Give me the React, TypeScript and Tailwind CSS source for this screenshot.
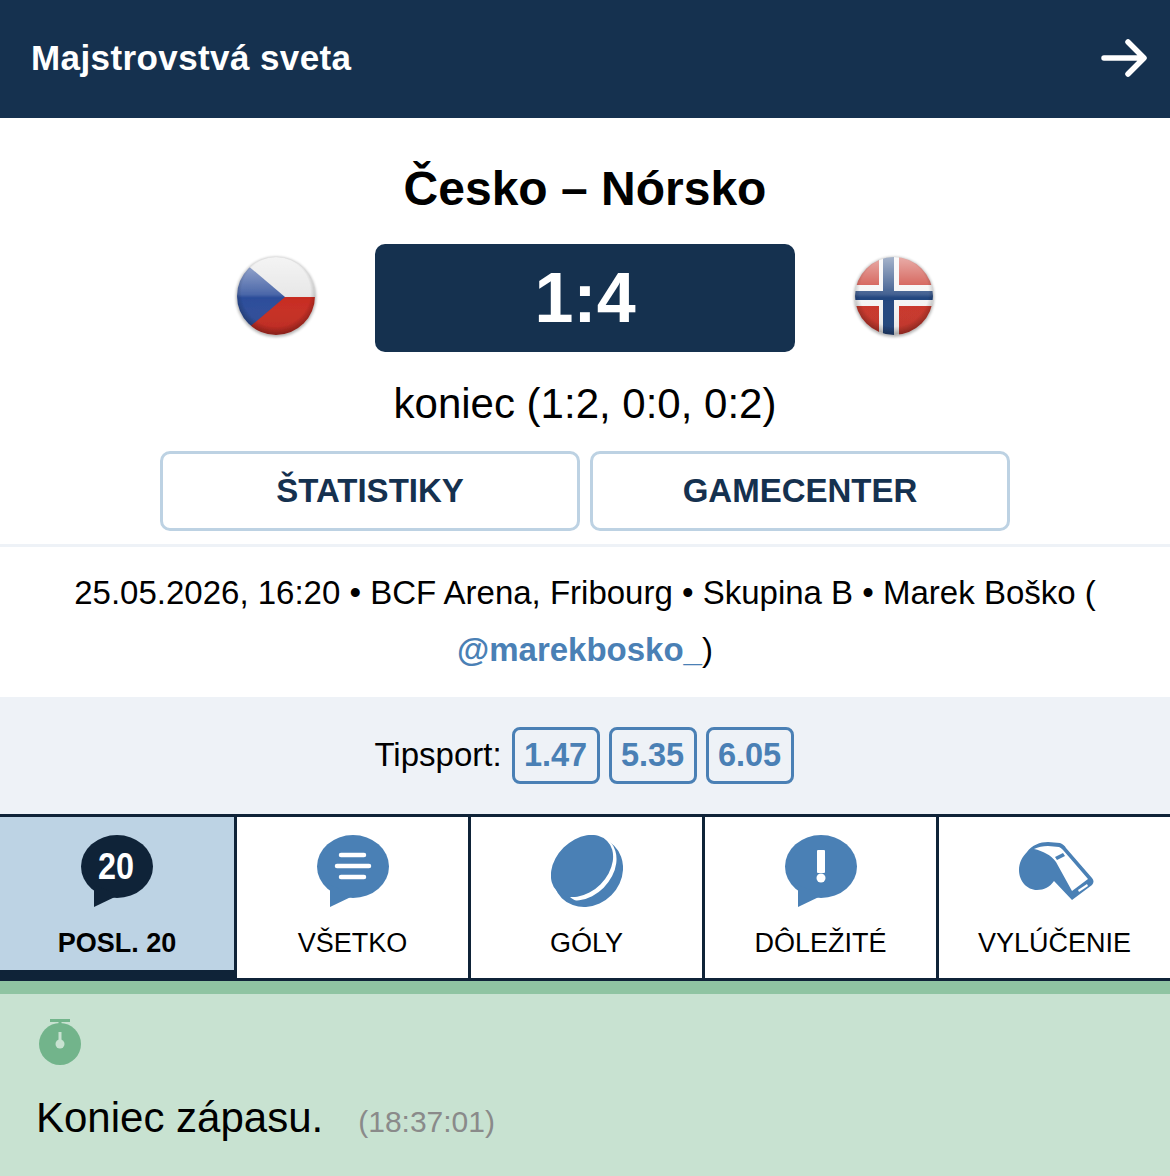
const Bubble = ({ fill, children }: { fill: string; children?: React.ReactNode }) => (
  <svg width="72" height="72" viewBox="0 0 72 72">
    <ellipse cx="36" cy="31.5" rx="36" ry="31.5" fill={fill} />
    <path d="M13 50 L13 72 L38 60 Z" fill={fill} />
    {children}
  </svg>
);

const PuckIcon = () => (
  <svg width="72" height="73" viewBox="6 5 72 73">
    <defs>
      <clipPath id="puck-rim">
        <ellipse cx="43" cy="42" rx="37" ry="33" transform="rotate(-45 43 42)" />
      </clipPath>
    </defs>
    <ellipse cx="43" cy="42" rx="37" ry="33" transform="rotate(-45 43 42)" fill="#4a80b5" />
    <ellipse cx="38.5" cy="37.5" rx="37" ry="28.5" transform="rotate(-45 38.5 37.5)" fill="#ffffff" clipPath="url(#puck-rim)" />
    <ellipse cx="37" cy="36" rx="35.5" ry="26" transform="rotate(-45 37 36)" fill="#4a80b5" />
  </svg>
);

const WhistleIcon = () => (
  <svg className="ml-[3px] mt-[7px]" width="75" height="60" viewBox="9 7 75 60">
    <path
      d="M17 17 C22 10 30 7 38 7 L50 8 C53 9 55 11 56 13 L82 43 C84 45 84 48 82 50 L62 65 L44 46 C40 52 34 55 27 55 C17 55 9 46 9 35 C9 28 12 22 17 17 Z"
      fill="#4a80b5"
    />
    <path d="M24 14 C28 12 33 11 38 11 L49 12 C51 13 52 14 53 15 L78 44 L62 56 L46 27 C41 20 33 16 24 14 Z" fill="#ffffff" />
    <path d="M45 22 L53 18 L55 21 L47 25 Z" fill="#4a80b5" />
    <path d="M68 55 L77 49 L78 51 L69 57 Z" fill="#ffffff" />
  </svg>
);

const Gloss = ({ id }: { id: string }) => (
  <>
    <rect width="88" height="88" fill={`url(#${id}-shine)`} />
    <circle cx="44" cy="44" r="39" fill={`url(#${id}-rim)`} />
  </>
);

const FlagDefs = ({ id }: { id: string }) => (
  <defs>
    <clipPath id={`${id}-clip`}>
      <circle cx="44" cy="44" r="39" />
    </clipPath>
    <filter id={`${id}-soft`} x="-20%" y="-20%" width="140%" height="140%">
      <feGaussianBlur stdDeviation="0.6" />
    </filter>
    <filter id={`${id}-shadow`} x="-20%" y="-20%" width="140%" height="140%">
      <feGaussianBlur stdDeviation="1.6" />
    </filter>
    <linearGradient id={`${id}-shine`} x1="0" y1="0" x2="0" y2="1">
      <stop offset="0.05" stopColor="#ffffff" stopOpacity="0.6" />
      <stop offset="0.48" stopColor="#ffffff" stopOpacity="0.15" />
      <stop offset="0.52" stopColor="#ffffff" stopOpacity="0" />
      <stop offset="1" stopColor="#000000" stopOpacity="0.1" />
    </linearGradient>
    <radialGradient id={`${id}-rim`} cx="0.5" cy="0.45" r="0.55">
      <stop offset="0.8" stopColor="#000000" stopOpacity="0" />
      <stop offset="1" stopColor="#000000" stopOpacity="0.28" />
    </radialGradient>
  </defs>
);

const CzechFlag = () => (
  <svg className="mb-[4px]" width="88" height="88" viewBox="0 0 88 88">
    <FlagDefs id="cz" />
    <circle cx="44" cy="45" r="40" fill="#000000" opacity="0.3" filter="url(#cz-shadow)" />
    <g clipPath="url(#cz-clip)" filter="url(#cz-soft)">
      <rect width="88" height="45" fill="#e4e4e4" />
      <rect y="45" width="88" height="43" fill="#c72c22" />
      <path d="M-12 -10 L53 45 L-12 100 Z" fill="#2c4d9a" />
      <Gloss id="cz" />
    </g>
  </svg>
);

const NorwayFlag = () => (
  <svg className="mb-[4px]" width="88" height="88" viewBox="0 0 88 88">
    <FlagDefs id="no" />
    <circle cx="44" cy="45" r="40" fill="#000000" opacity="0.3" filter="url(#no-shadow)" />
    <g clipPath="url(#no-clip)" filter="url(#no-soft)">
      <rect width="88" height="88" fill="#c9362b" />
      <rect x="29" width="20" height="88" fill="#f4f4f4" />
      <rect y="33" width="88" height="21" fill="#f4f4f4" />
      <rect x="33" width="11" height="88" fill="#23467f" />
      <rect y="39" width="88" height="9" fill="#23467f" />
      <Gloss id="no" />
    </g>
  </svg>
);

const Stopwatch = () => (
  <svg width="44" height="50" viewBox="0 0 44 50">
    <rect x="12" y="1" width="20" height="3" fill="#72b48b" />
    <rect x="20.5" y="3" width="3" height="3" fill="#72b48b" />
    <circle cx="22" cy="26" r="21" fill="#72b48b" />
    <rect x="20.5" y="14" width="3" height="12" fill="#c8e2d1" />
    <circle cx="22" cy="26" r="4.5" fill="#c8e2d1" />
  </svg>
);

const tabs = [
  {
    label: 'POSL. 20',
    active: true,
    icon: (
      <Bubble fill="#0f2338">
        <text x="17" y="44" fontSize="36" fontWeight="700" fill="#ffffff" textLength="36" lengthAdjust="spacingAndGlyphs">
          20
        </text>
      </Bubble>
    ),
  },
  {
    label: 'VŠETKO',
    icon: (
      <Bubble fill="#4a80b5">
        <path d="M24 20 H47 M20 31 H52 M24 42 H47" stroke="#ffffff" strokeWidth="4.5" strokeLinecap="round" />
      </Bubble>
    ),
  },
  { label: 'GÓLY', icon: <PuckIcon /> },
  {
    label: 'DÔLEŽITÉ',
    icon: (
      <Bubble fill="#4a80b5">
        <rect x="32" y="15" width="8" height="23" fill="#ffffff" rx="1" />
        <circle cx="36" cy="43" r="4.5" fill="#ffffff" />
      </Bubble>
    ),
  },
  { label: 'VYLÚČENIE', icon: <WhistleIcon /> },
];

const odds = ['1.47', '5.35', '6.05'];

export default function App() {
  return (
    <div className="h-[1176px] w-[1170px] overflow-hidden bg-white font-['Liberation_Sans',Arial,sans-serif] text-black">
      <header className="flex h-[118px] items-center justify-between bg-[#15314f] pl-[31px] pr-[23px]">
        <h1 className="pb-[2px] text-[35px] font-bold tracking-[0.4px] text-white">Majstrovstvá sveta</h1>
        <svg className="mb-[2px]" width="46" height="38" viewBox="0 0 46 38" fill="none" stroke="#ffffff" strokeWidth="5.5" strokeLinecap="round" strokeLinejoin="round">
          <path d="M3 19 H42 M27 3 L43 19 L27 35" />
        </svg>
      </header>

      <section className="flex flex-col items-center">
        <h2 className="mt-[40px] text-[48px] leading-[62px] font-bold">Česko – Nórsko</h2>
        <div className="mt-[24px] flex items-center gap-[55px]">
          <CzechFlag />
          <div className="flex h-[108px] w-[420px] items-center justify-center rounded-[10px] bg-[#15314f] text-[70px] font-bold text-white">
            1:4
          </div>
          <NorwayFlag />
        </div>
        <p className="mt-[28px] text-[42px] leading-[48px]">koniec (1:2, 0:0, 0:2)</p>
        <div className="mt-[23px] flex gap-[10px]">
          <button className="h-[80px] w-[420px] rounded-[10px] border-[3px] border-[#bdd2e3] pb-[1px] text-[33px] font-bold text-[#15314f]">
            ŠTATISTIKY
          </button>
          <button className="h-[80px] w-[420px] rounded-[10px] border-[3px] border-[#bdd2e3] pb-[1px] text-[33px] font-bold text-[#15314f]">
            GAMECENTER
          </button>
        </div>
      </section>

      <div className="mt-[13px] h-[3px] bg-[#eef2f7]" />

      <p className="h-[150px] pt-[17px] text-center text-[33px] leading-[57px]">
        25.05.2026, 16:20 • BCF Arena, Fribourg • Skupina B • Marek Boško (
        <br />
        <span className="font-bold text-[#4a80b5]">@marekbosko_</span>)
      </p>

      <div className="flex h-[117px] items-center justify-center gap-[9px] bg-[#eef2f7] pr-[2px]">
        <span className="mr-[1px] pb-[2px] text-[33px]">Tipsport:</span>
        {odds.map((o) => (
          <span
            key={o}
            className="flex h-[57px] w-[88px] items-center justify-center rounded-[8px] border-[3px] border-[#4a80b5] pb-[1px] text-[32.5px] font-bold text-[#4a80b5]"
          >
            {o}
          </span>
        ))}
      </div>

      <nav className="flex h-[167px] border-y-[3px] border-[#0f2338]">
        {tabs.map((t, i) => (
          <div
            key={t.label}
            className={`flex h-full w-[234px] flex-col items-center ${i > 0 ? 'border-l-[3px] border-[#0f2338]' : ''} ${t.active ? 'border-b-[8px] border-b-[#0f2338] bg-[#bdd3e4] font-bold' : ''}`}
          >
            <div className="flex h-[90px] items-start pt-[18px]">{t.icon}</div>
            <span className="mt-[19px] text-[27px] leading-[34px]">{t.label}</span>
          </div>
        ))}
      </nav>

      <div className="h-[13px] bg-[#8fc4a2]" />
      <div className="h-[182px] bg-[#c8e2d1] pl-[38px] pt-[24px]">
        <Stopwatch />
        <p className="mt-[25px] -ml-[2px] flex items-baseline">
          <span className="text-[42px] leading-[50px]">Koniec zápasu.</span>
          <span className="ml-[35px] text-[30px] text-[#8a8a8a]">(18:37:01)</span>
        </p>
      </div>
    </div>
  );
}
